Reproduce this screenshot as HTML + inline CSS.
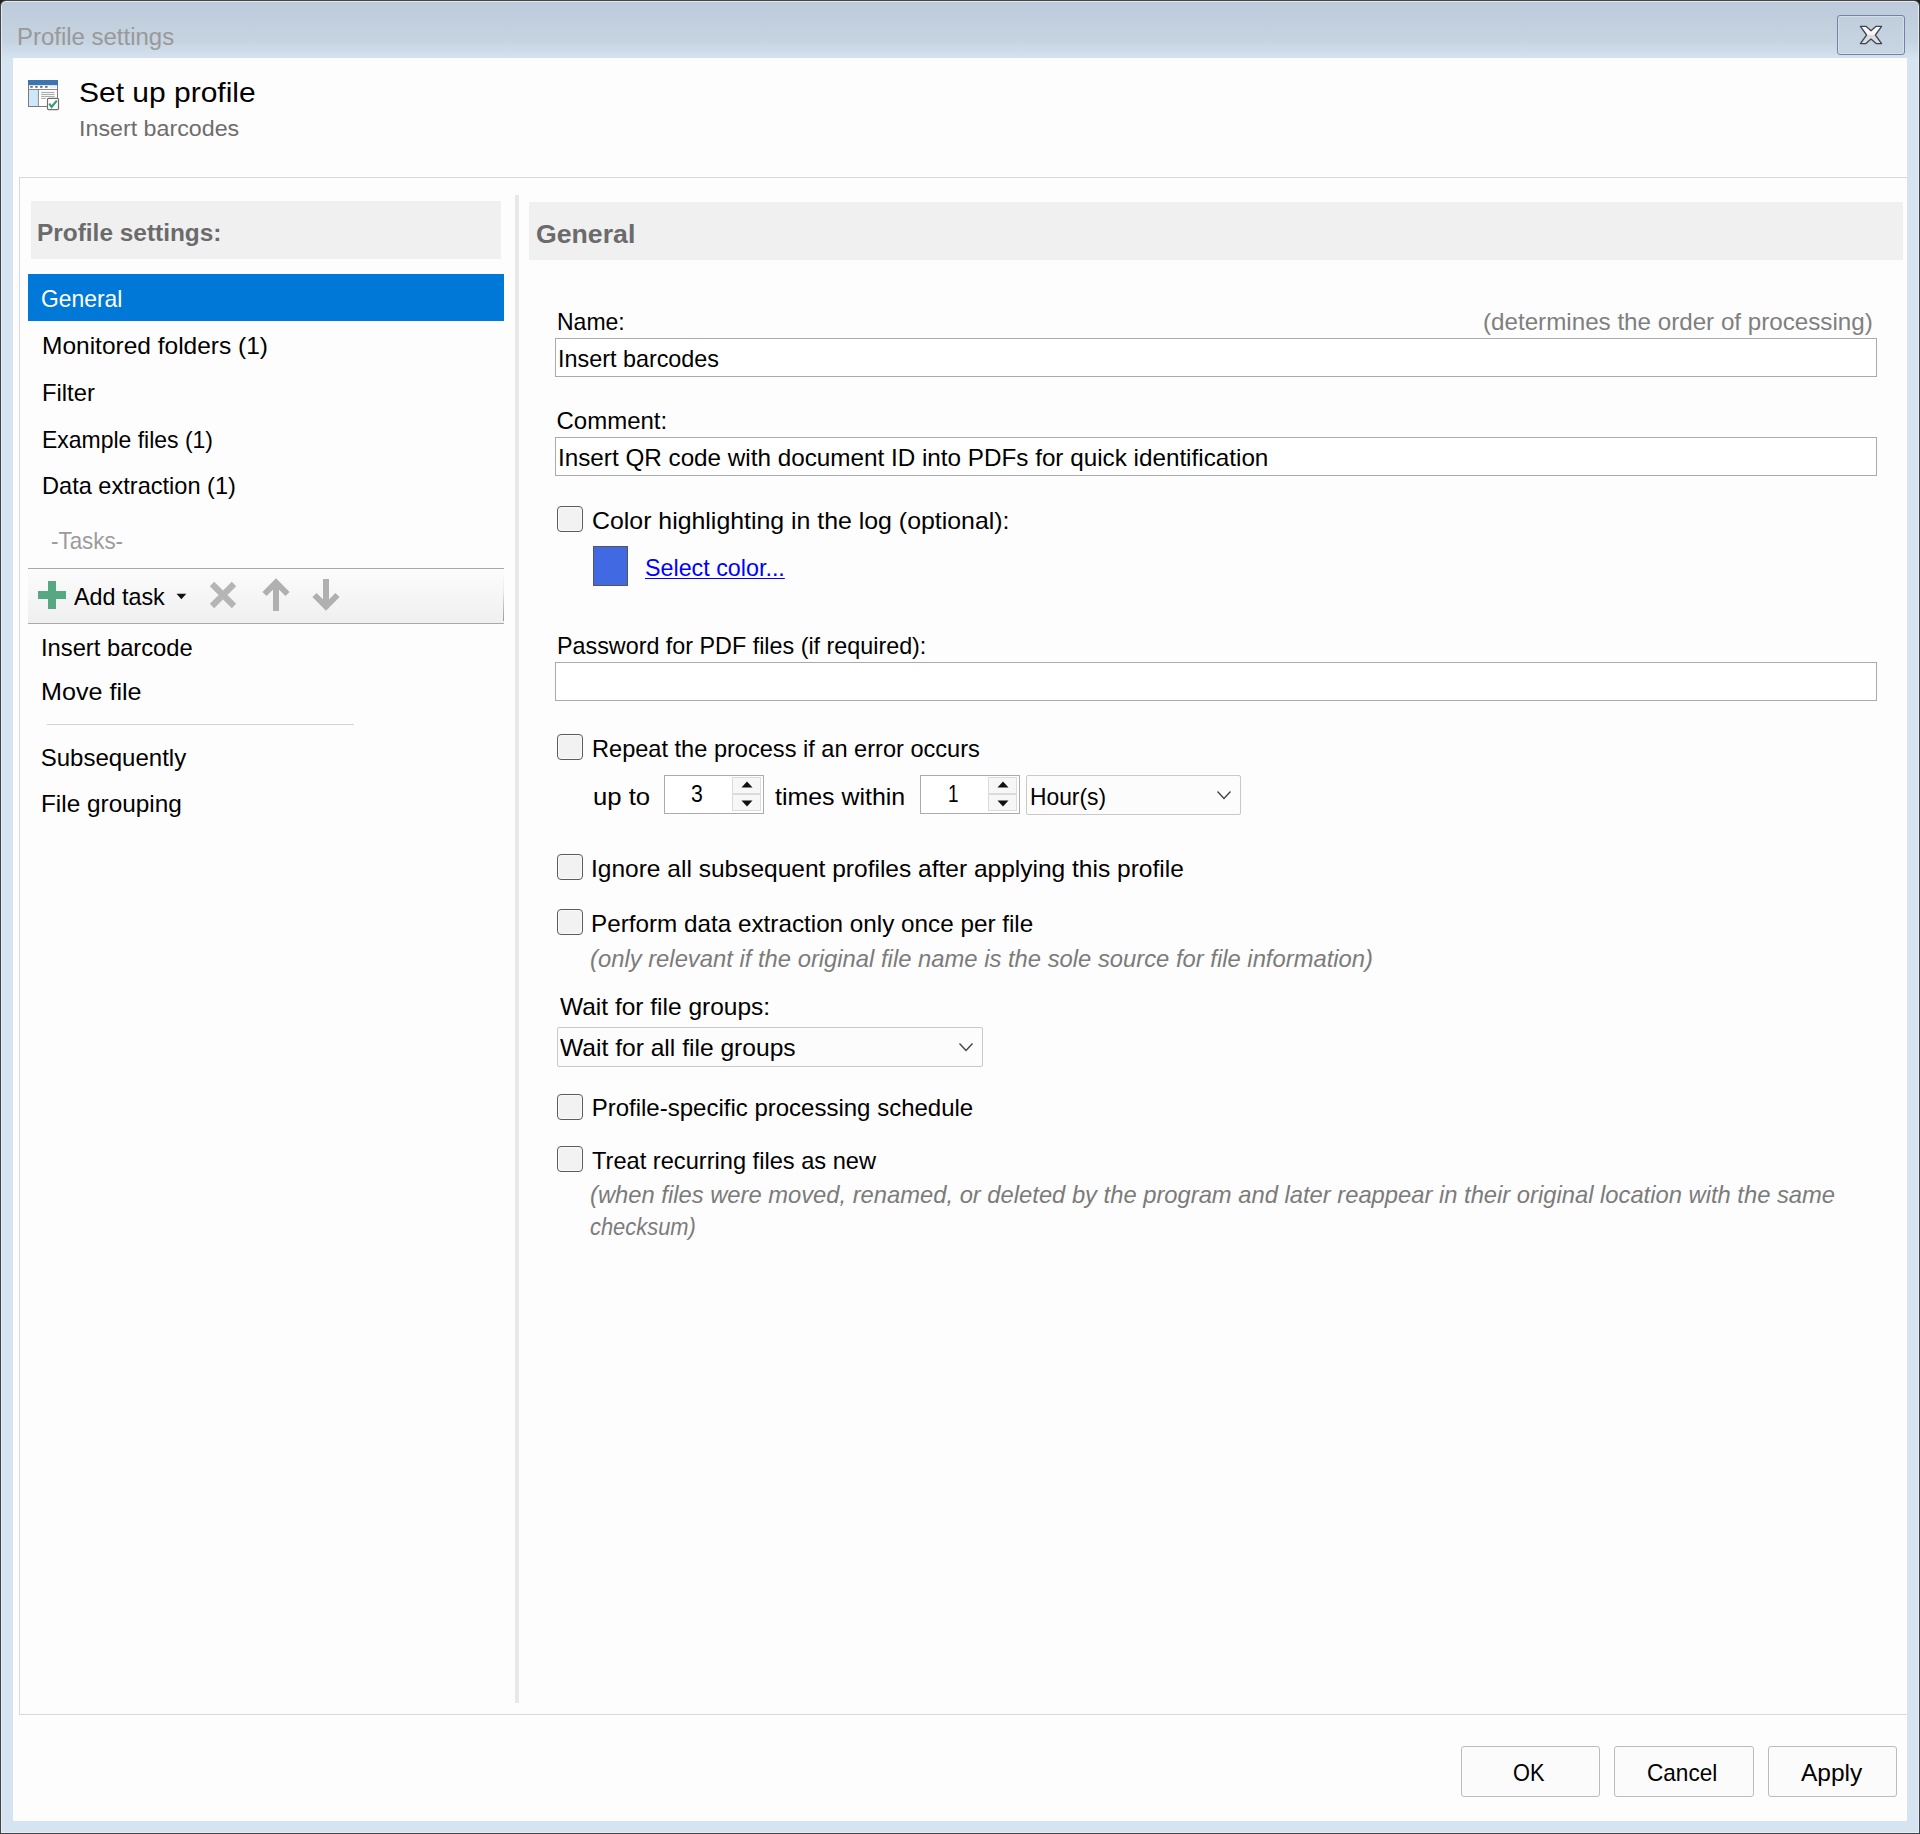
<!DOCTYPE html>
<html><head><meta charset="utf-8"><title>Profile settings</title>
<style>
*{box-sizing:border-box;margin:0;padding:0}
html,body{width:1920px;height:1834px;overflow:hidden;background:#1f1f1f}
body{position:relative;font-family:"Liberation Sans",sans-serif;font-size:24px;color:#000}
.a{position:absolute}
.t{position:absolute;white-space:nowrap;line-height:40px;height:40px;transform-origin:0 0}
#win{position:absolute;left:0;top:0;width:1920px;height:1834px;border:1px solid #454545;border-radius:6px 6px 0 0;
 background:linear-gradient(#bccada 0px,#c3d0de 25px,#c6d3e0 40px,#d3e0ed 55px,#d6e3f0 58px,#d6e3f0 100%);
 box-shadow:inset 0 0 0 1px rgba(232,236,246,.9)}
</style></head><body>
<div id="win"></div>
<div class="t" style="left:17.10px;top:17px;font-size:23.5px;color:#999999;transform:scaleX(1.0195);">Profile settings</div>
<div class="a" style="left:1837px;top:15px;width:68px;height:40px;border:1px solid #7282a2;border-radius:3px;box-shadow:inset 0 0 0 1px rgba(255,255,255,.3);background:linear-gradient(#c0cddb,#c8d5e2)"></div>
<svg class="a" style="left:1858px;top:24px" width="26" height="22" viewBox="0 0 26 22">
<defs><linearGradient id="xg" x1="0" y1="0" x2="0" y2="1"><stop offset="0" stop-color="#fff"/><stop offset=".5" stop-color="#f4f4f4"/><stop offset=".5" stop-color="#dcdcdc"/><stop offset="1" stop-color="#dedede"/></linearGradient></defs>
<path d="M2.4 2.3 H7.9 L13 6.8 L18.1 2.3 H23.6 L17.4 11 L23.6 19.6 H18.1 L13 15.1 L7.9 19.6 H2.4 L8.6 11 Z" fill="url(#xg)" stroke="#3f4556" stroke-width="1.3" stroke-linejoin="round"/>
</svg>
<div class="a" style="left:13px;top:58px;width:1894px;height:1763px;background:#fdfdfd"></div>
<svg class="a" style="left:27px;top:79px" width="34" height="32" viewBox="0 0 34 32">
<rect x="1.5" y="1.5" width="29" height="26" fill="#fff" stroke="#7a7a7a" stroke-width="1"/>
<rect x="1" y="1" width="30" height="5.2" fill="#3b76b3"/>
<rect x="2" y="11" width="9" height="16" fill="#cde8fb"/>
<line x1="11.4" y1="10.5" x2="11.4" y2="27.5" stroke="#8a8a8a" stroke-width="1"/>
<line x1="1.5" y1="10.5" x2="30.5" y2="10.5" stroke="#8a8a8a" stroke-width="1"/>
<rect x="3.2" y="7.1" width="2.6" height="1.6" fill="#666"/><rect x="8.1" y="7.1" width="2.6" height="1.6" fill="#666"/><rect x="13" y="7.1" width="2.6" height="1.6" fill="#666"/><rect x="18" y="7.1" width="2.6" height="1.6" fill="#666"/>
<rect x="22.2" y="6.9" width="7" height="2" fill="#eeeeee"/>
<line x1="14.1" y1="13.4" x2="27.6" y2="13.4" stroke="#9a9a9a" stroke-width="0.9"/>
<line x1="14.1" y1="15.4" x2="27.6" y2="15.4" stroke="#9a9a9a" stroke-width="0.9"/>
<line x1="14.1" y1="17.4" x2="27.6" y2="17.4" stroke="#9a9a9a" stroke-width="0.9"/>
<line x1="14.1" y1="19.4" x2="18.8" y2="19.4" stroke="#9a9a9a" stroke-width="0.9"/>
<rect x="20.5" y="19.3" width="11" height="11.3" rx="1" fill="#fff" stroke="#6f6f6f" stroke-width="1.2"/>
<path d="M22.3 24.6 L24.6 27.9 L29.8 21.6" fill="none" stroke="#2e9e6e" stroke-width="2.1"/>
</svg>
<div class="t" style="left:79.10px;top:73px;font-size:28.0px;color:#000;transform:scaleX(1.0709);">Set up profile</div>
<div class="t" style="left:78.70px;top:109px;font-size:22.5px;color:#6d6d6d;transform:scaleX(1.0329);">Insert barcodes</div>
<div class="a" style="left:19px;top:177px;width:1888px;height:1538px;border:1px solid #d9d9d9;border-right:none"></div>
<div class="a" style="left:31px;top:201px;width:470px;height:58px;background:#f0f0f0"></div>
<div class="t" style="left:37.10px;top:213px;font-size:24.0px;font-weight:bold;color:#6b6b6b;transform:scaleX(1.0171);">Profile settings:</div>
<div class="a" style="left:28px;top:274px;width:476px;height:47px;background:#0078d7"></div>
<div class="t" style="left:40.90px;top:279px;font-size:24.0px;color:#fff;transform:scaleX(0.9518);">General</div>
<div class="t" style="left:41.50px;top:326px;font-size:24.0px;color:#000;transform:scaleX(1.0204);">Monitored folders (1)</div>
<div class="t" style="left:41.50px;top:373px;font-size:24.0px;color:#000;transform:scaleX(0.9906);">Filter</div>
<div class="t" style="left:41.50px;top:420px;font-size:24.0px;color:#000;transform:scaleX(0.9567);">Example files (1)</div>
<div class="t" style="left:41.50px;top:466px;font-size:24.0px;color:#000;transform:scaleX(0.9822);">Data extraction (1)</div>
<div class="t" style="left:50.50px;top:521px;font-size:24.0px;color:#9b9b9b;transform:scaleX(0.9318);">-Tasks-</div>
<div class="a" style="left:28px;top:568px;width:476px;height:56px;border-top:1px solid #a9a9a9;border-bottom:1px solid #a9a9a9;background:linear-gradient(#fcfcfc,#efefef)"></div>
<div class="a" style="left:503px;top:572px;width:1px;height:49px;background:linear-gradient(rgba(150,150,150,0) 0%,rgba(150,150,150,.15) 40%,#9a9a9a 100%)"></div>
<div class="a" style="left:38px;top:590.5px;width:28px;height:8.5px;background:#55a882"></div>
<div class="a" style="left:48px;top:581px;width:8px;height:28px;background:#55a882"></div>
<div class="t" style="left:74.00px;top:577px;font-size:24.0px;color:#000;transform:scaleX(0.9713);">Add task</div>
<svg class="a" style="left:176px;top:593px" width="11" height="7"><path d="M0.5 0.8 H10.3 L5.4 6.2 Z" fill="#111"/></svg>
<svg class="a" style="left:208px;top:580px" width="30" height="30"><path d="M4 4 L26 26 M26 4 L4 26" stroke="#b5b5b5" stroke-width="6.2" stroke-linecap="butt"/></svg>
<svg class="a" style="left:261px;top:578px" width="30" height="34"><path d="M15 4 V33" stroke="#b0b0b0" stroke-width="6"/><path d="M3.5 16 L15 4.5 L26.5 16" fill="none" stroke="#b0b0b0" stroke-width="6"/></svg>
<svg class="a" style="left:311px;top:578px" width="30" height="34"><path d="M15 1 V29" stroke="#b0b0b0" stroke-width="6"/><path d="M3.5 17 L15 28.5 L26.5 17" fill="none" stroke="#b0b0b0" stroke-width="6"/></svg>
<div class="t" style="left:40.70px;top:628px;font-size:24.0px;color:#000;transform:scaleX(0.9889);">Insert barcode</div>
<div class="t" style="left:40.70px;top:672px;font-size:24.0px;color:#000;transform:scaleX(1.0469);">Move file</div>
<div class="a" style="left:47px;top:724px;width:307px;height:1px;background:#d3d3d3"></div>
<div class="t" style="left:40.70px;top:738px;font-size:24.0px;color:#000;">Subsequently</div>
<div class="t" style="left:40.70px;top:784px;font-size:24.0px;color:#000;transform:scaleX(1.0144);">File grouping</div>
<div class="a" style="left:515px;top:195px;width:4px;height:1508px;background:#e8e8e8"></div>
<div class="a" style="left:529px;top:202px;width:1374px;height:58px;background:#f0f0f0"></div>
<div class="t" style="left:535.80px;top:214px;font-size:26.5px;font-weight:bold;color:#6b6b6b;transform:scaleX(1.0061);">General</div>
<div class="t" style="left:557.30px;top:302px;font-size:24.0px;color:#000;transform:scaleX(0.9577);">Name:</div>
<div class="t" style="left:1482.60px;top:302px;font-size:24.0px;color:#7f7f7f;transform:scaleX(1.0075);">(determines the order of processing)</div>
<div class="a" style="left:555px;top:338px;width:1322px;height:39px;border:1px solid #a9abb3;background:#fff"></div>
<div class="t" style="left:558.40px;top:339px;font-size:24.0px;color:#000;transform:scaleX(0.9733);">Insert barcodes</div>
<div class="t" style="left:556.50px;top:401px;font-size:24.0px;color:#000;">Comment:</div>
<div class="a" style="left:555px;top:437px;width:1322px;height:39px;border:1px solid #a9abb3;background:#fff"></div>
<div class="t" style="left:557.60px;top:438px;font-size:24.0px;color:#000;transform:scaleX(1.0105);">Insert QR code with document ID into PDFs for quick identification</div>
<div class="a" style="left:557px;top:506px;width:26px;height:26px;border:1.8px solid #5c5c5c;border-radius:4px;background:#f2f2f2;box-shadow:inset 0 0 0 1px #f9f9f9"></div>
<div class="t" style="left:592.00px;top:501px;font-size:24.0px;color:#000;transform:scaleX(1.0360);">Color highlighting in the log (optional):</div>
<div class="a" style="left:593px;top:546px;width:35px;height:40px;border:1px solid #555;background:#4169e1"></div>
<div class="t" style="left:645.25px;top:548px;font-size:24.0px;color:#0000ff;transform:scaleX(0.9705);text-decoration:underline;text-decoration-thickness:1px;text-underline-offset:2px">Select color...</div>
<div class="t" style="left:557.00px;top:626px;font-size:24.0px;color:#000;transform:scaleX(0.9717);">Password for PDF files (if required):</div>
<div class="a" style="left:555px;top:662px;width:1322px;height:39px;border:1px solid #a9abb3;background:#fff"></div>
<div class="a" style="left:557px;top:734px;width:26px;height:26px;border:1.8px solid #5c5c5c;border-radius:4px;background:#f2f2f2;box-shadow:inset 0 0 0 1px #f9f9f9"></div>
<div class="t" style="left:592.00px;top:729px;font-size:24.0px;color:#000;transform:scaleX(0.9823);">Repeat the process if an error occurs</div>
<div class="t" style="left:592.75px;top:777px;font-size:24.0px;color:#000;transform:scaleX(1.0708);">up to</div>
<div class="a" style="left:664px;top:775px;width:100px;height:39px;border:1px solid #a9abb3;background:#fff"></div>
<div class="a" style="left:732px;top:777px;width:29px;height:17px;background:#f7f7f7;border:1px solid #dcdcdc"></div>
<div class="a" style="left:732px;top:794px;width:29px;height:17px;background:#f7f7f7;border:1px solid #dcdcdc"></div>
<svg class="a" style="left:741px;top:781px" width="12" height="7"><path d="M0.5 6.5 L6 0.5 L11.5 6.5 Z" fill="#111"/></svg>
<svg class="a" style="left:741px;top:800px" width="12" height="7"><path d="M0.5 0.5 L6 6.5 L11.5 0.5 Z" fill="#111"/></svg>
<div class="t" style="left:691.00px;top:774px;font-size:24.0px;color:#000;transform:scaleX(0.8846);">3</div>
<div class="t" style="left:775.25px;top:777px;font-size:24.0px;color:#000;transform:scaleX(1.0380);">times within</div>
<div class="a" style="left:920px;top:775px;width:100px;height:39px;border:1px solid #a9abb3;background:#fff"></div>
<div class="a" style="left:988px;top:777px;width:29px;height:17px;background:#f7f7f7;border:1px solid #dcdcdc"></div>
<div class="a" style="left:988px;top:794px;width:29px;height:17px;background:#f7f7f7;border:1px solid #dcdcdc"></div>
<svg class="a" style="left:997px;top:781px" width="12" height="7"><path d="M0.5 6.5 L6 0.5 L11.5 6.5 Z" fill="#111"/></svg>
<svg class="a" style="left:997px;top:800px" width="12" height="7"><path d="M0.5 0.5 L6 6.5 L11.5 0.5 Z" fill="#111"/></svg>
<div class="t" style="left:947.75px;top:774px;font-size:24.0px;color:#000;transform:scaleX(0.7885);">1</div>
<div class="a" style="left:1026px;top:775px;width:215px;height:40px;border:1px solid #c9c9c9;border-radius:2px;background:#fcfcfc"></div>
<div class="t" style="left:1030.00px;top:777px;font-size:24.0px;color:#000;transform:scaleX(0.9500);">Hour(s)</div>
<svg class="a" style="left:1216px;top:790px" width="16" height="11"><path d="M1.5 1.5 L8 8.5 L14.5 1.5" fill="none" stroke="#404040" stroke-width="1.3"/></svg>
<div class="a" style="left:557px;top:854px;width:26px;height:26px;border:1.8px solid #5c5c5c;border-radius:4px;background:#f2f2f2;box-shadow:inset 0 0 0 1px #f9f9f9"></div>
<div class="t" style="left:591.30px;top:849px;font-size:24.0px;color:#000;transform:scaleX(1.0214);">Ignore all subsequent profiles after applying this profile</div>
<div class="a" style="left:557px;top:909px;width:26px;height:26px;border:1.8px solid #5c5c5c;border-radius:4px;background:#f2f2f2;box-shadow:inset 0 0 0 1px #f9f9f9"></div>
<div class="t" style="left:591.30px;top:904px;font-size:24.0px;color:#000;transform:scaleX(1.0107);">Perform data extraction only once per file</div>
<div class="t" style="left:589.60px;top:939px;font-size:24.0px;font-style:italic;color:#7b7b7b;transform:scaleX(0.9915);">(only relevant if the original file name is the sole source for file information)</div>
<div class="t" style="left:559.50px;top:987px;font-size:24.0px;color:#000;transform:scaleX(1.0209);">Wait for file groups:</div>
<div class="a" style="left:557px;top:1027px;width:426px;height:40px;border:1px solid #c9c9c9;border-radius:2px;background:#fcfcfc"></div>
<div class="t" style="left:560.20px;top:1028px;font-size:24.0px;color:#000;transform:scaleX(1.0252);">Wait for all file groups</div>
<svg class="a" style="left:958px;top:1042px" width="16" height="11"><path d="M1.5 1.5 L8 8.5 L14.5 1.5" fill="none" stroke="#404040" stroke-width="1.3"/></svg>
<div class="a" style="left:557px;top:1094px;width:26px;height:26px;border:1.8px solid #5c5c5c;border-radius:4px;background:#f2f2f2;box-shadow:inset 0 0 0 1px #f9f9f9"></div>
<div class="t" style="left:591.70px;top:1088px;font-size:24.0px;color:#000;">Profile-specific processing schedule</div>
<div class="a" style="left:557px;top:1146px;width:26px;height:26px;border:1.8px solid #5c5c5c;border-radius:4px;background:#f2f2f2;box-shadow:inset 0 0 0 1px #f9f9f9"></div>
<div class="t" style="left:591.70px;top:1141px;font-size:24.0px;color:#000;transform:scaleX(0.9844);">Treat recurring files as new</div>
<div class="t" style="left:590.00px;top:1175px;font-size:24.0px;font-style:italic;color:#7b7b7b;transform:scaleX(0.9897);">(when files were moved, renamed, or deleted by the program and later reappear in their original location with the same</div>
<div class="t" style="left:590.00px;top:1207px;font-size:24.0px;font-style:italic;color:#7b7b7b;transform:scaleX(0.9121);">checksum)</div>
<div class="a" style="left:1461px;top:1746px;width:139px;height:51px;border:1px solid #bcbcbc;border-radius:3px;background:#fbfbfb"></div>
<div class="a" style="left:1614px;top:1746px;width:140px;height:51px;border:1px solid #bcbcbc;border-radius:3px;background:#fbfbfb"></div>
<div class="a" style="left:1768px;top:1746px;width:129px;height:51px;border:1px solid #bcbcbc;border-radius:3px;background:#fbfbfb"></div>
<div class="t" style="left:1512.75px;top:1753px;font-size:24.0px;color:#000;transform:scaleX(0.9071);">OK</div>
<div class="t" style="left:1646.50px;top:1753px;font-size:24.0px;color:#000;transform:scaleX(0.9400);">Cancel</div>
<div class="t" style="left:1800.75px;top:1753px;font-size:24.0px;color:#000;transform:scaleX(1.0208);">Apply</div>
</body></html>
